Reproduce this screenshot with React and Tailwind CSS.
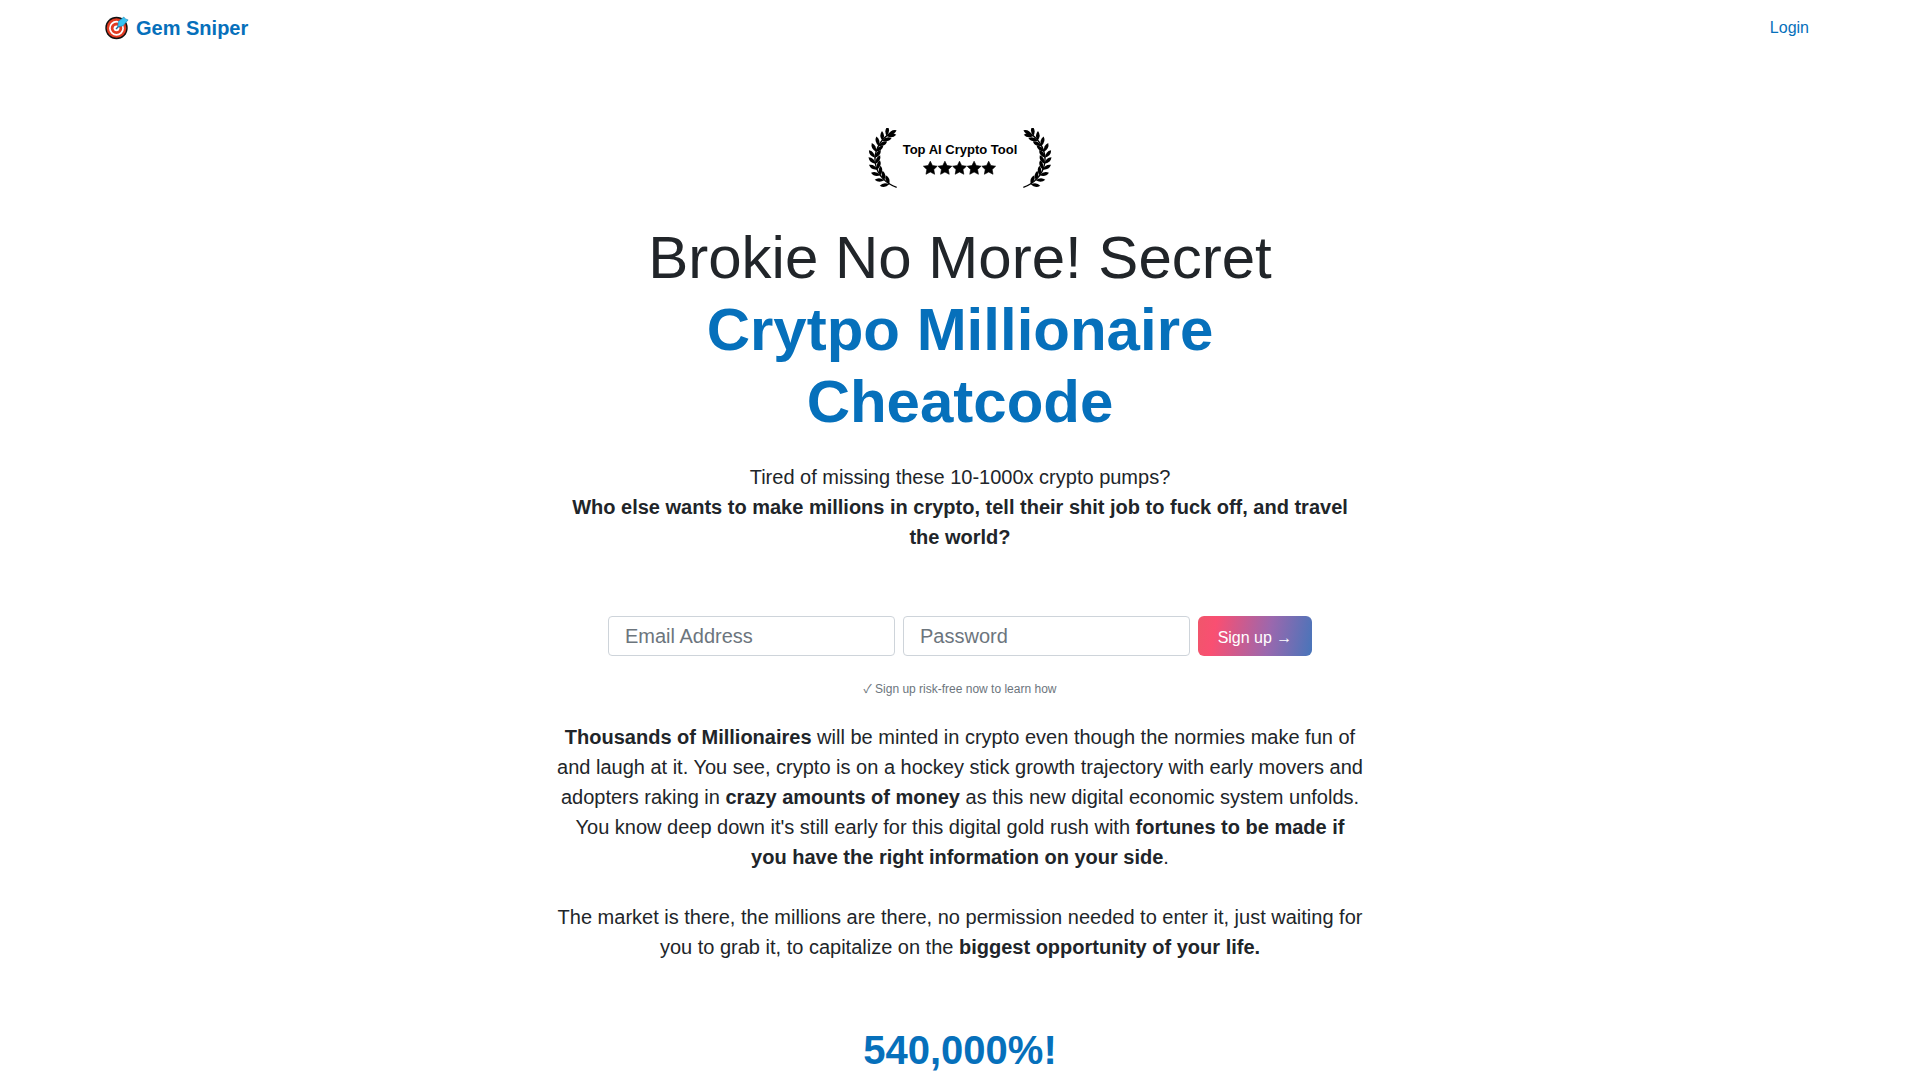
// points up the stem: x, y and the direction of growth in degrees
const STEM = [
    [70, 169, -150], [55, 157, -138], [43, 142, -126], [34, 125, -112], [29, 107, -100],
    [27, 89, -91], [30, 71, -78], [38, 54, -66], [49, 38, -54], [62, 24, -46],
];
const LEAF = 'M0 0 Q16 -11 29 0 Q16 11 0 0z';
const STAR = 'M12 .8l3.5 7.1 7.9 1.1-5.7 5.5 1.4 7.8L12 18.6l-7.1 3.7 1.4-7.8L.6 9l7.9-1.1z';
const STAR_OFFSETS = [0, 24, 48, 72, 96];

function Laurel({ className }) {
    return (
        <svg viewBox="0 0 96 180" className={`h-[60px] w-8 ${className || ''}`} aria-hidden="true">
            <path d="M92 178 C62 168 34 142 28 106 C22 70 42 36 72 16" fill="none" stroke="#000" strokeWidth="4" />
            {STEM.map(([x, y, angle]) => (
                <g key={y} transform={`translate(${x} ${y}) rotate(${angle})`}>
                    <path d={LEAF} transform="rotate(-38)" />
                    <path d={LEAF} transform="rotate(38)" />
                </g>
            ))}
            <path d={LEAF} transform="translate(66 20) rotate(-28)" />
        </svg>
    );
}

function TargetLogo() {
    return (
        <svg viewBox="0 0 24 24" className="size-6" aria-hidden="true">
            <circle cx="11.5" cy="12" r="11.2" fill="#111" />
            <circle cx="11.5" cy="12" r="9.8" fill="#e23b22" />
            <circle cx="11.5" cy="12.3" r="6.6" fill="none" stroke="#fff" strokeWidth="1.7" />
            <circle cx="11.5" cy="12.3" r="2.9" fill="#fff" />
            <path d="M11 13L17 7" stroke="#1c6fa0" strokeWidth="1.4" />
            <path d="M12.8 10.8l.5-5.2L18.8 1l1.6 1.9 2.7 1-5.2 6z" fill="#35c3f3" stroke="#1c7fb0" strokeWidth=".6" />
        </svg>
    );
}

function Navbar() {
    return (
        <nav className="flex items-center justify-between pl-[105px] pr-[111px] h-14">
            <a href="#" className="flex items-center gap-[7px] text-xl font-bold text-[#0670bb]">
                <TargetLogo />
                Gem Sniper
            </a>
            <a href="#login" className="text-base text-[#0670bb]">Login</a>
        </nav>
    );
}

function Award() {
    return (
        <div className="flex items-center justify-center gap-[5px]">
            <Laurel />
            <div className="flex flex-col items-center">
                <span className="text-[13px] leading-5 font-bold text-black">Top AI Crypto Tool</span>
                <svg viewBox="0 0 120 24" className="h-4 w-[73px]" aria-hidden="true">
                    {STAR_OFFSETS.map((x) => (
                        <path key={x} d={STAR} transform={`translate(${x})`} stroke="#000" strokeLinejoin="round" />
                    ))}
                </svg>
            </div>
            <Laurel className="-scale-x-100" />
        </div>
    );
}

function SignupForm() {
    const field = 'min-w-0 flex-1 h-10 rounded border border-[#ced4da] bg-white px-4 text-xl text-[#212529] placeholder:text-[#6c757d]';

    return (
        <form className="mx-auto flex w-full max-w-[704px] gap-2" onSubmit={(e) => e.preventDefault()}>
            <input type="email" aria-label="Email Address" placeholder="Email Address" className={field} />
            <input type="password" aria-label="Password" placeholder="Password" className={field} />
            <button type="submit" className="h-10 w-[114px] rounded-md bg-linear-[100deg,#f0566b_0%,#f94f72_16%,#9a68ae_62%,#4775ba_100%] pt-1 text-base text-white">
                Sign up →
            </button>
        </form>
    );
}

export default function App() {
    return (
        <div className="bg-white font-['Liberation_Sans',Arial,sans-serif] text-[#212529]">
            <Navbar />
            <main className="mx-auto max-w-[808px] pt-[72px] text-center">
                <Award />
                <h1 className="mt-[34px] text-[60px] leading-[72px]">
                    Brokie No More! Secret <strong className="font-bold text-[#0670bb]">Crytpo Millionaire Cheatcode</strong>
                </h1>
                <p className="mt-6 mb-16 text-xl leading-[30px]">
                    Tired of missing these 10-1000x crypto pumps?
                    <br />
                    <strong>Who else wants to make millions in crypto, tell their shit job to fuck off, and travel the world?</strong>
                </p>
                <SignupForm />
                <p className="mt-6 text-xs leading-[18px] text-[#6c757d]">
                    <span className="font-['Noto_Sans_CJK_JP',sans-serif] leading-none">✓</span> Sign up risk-free now to learn how
                </p>
                <div className="mt-6 flex flex-col gap-[30px] text-xl leading-[30px]">
                    <p>
                        <strong>Thousands of Millionaires</strong> will be minted in crypto even though the normies make fun of
                        and laugh at it. You see, crypto is on a hockey stick growth trajectory with early movers and adopters
                        raking in <strong>crazy amounts of money</strong> as this new digital economic system unfolds. You know
                        deep down it's still early for this digital gold rush with <strong>fortunes to be made if you have the
                        right information on your side</strong>.
                    </p>
                    <p>
                        The market is there, the millions are there, no permission needed to enter it, just waiting for you to
                        grab it, to capitalize on the <strong>biggest opportunity of your life.</strong>
                    </p>
                </div>
                <h2 className="mt-16 text-[40px] leading-[48px] font-bold text-[#0670bb]">540,000%!</h2>
            </main>
        </div>
    );
}
